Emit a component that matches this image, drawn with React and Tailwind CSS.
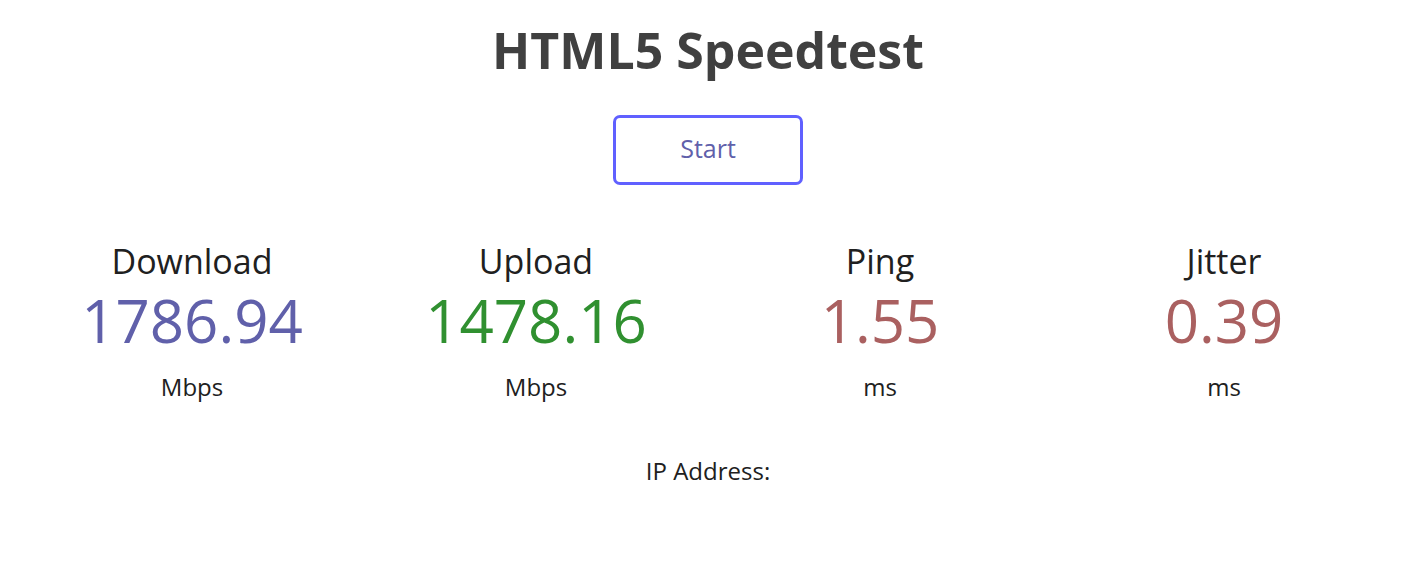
const results = [
  { name: 'Download', value: '1786.94', unit: 'Mbps', color: 'text-[#6060AA]' },
  { name: 'Upload', value: '1478.16', unit: 'Mbps', color: 'text-[#309030]' },
  { name: 'Ping', value: '1.55', unit: 'ms', color: 'text-[#AA6060]' },
  { name: 'Jitter', value: '0.39', unit: 'ms', color: 'text-[#AA6060]' },
]

const TestArea = ({ name, value, unit, color }) => (
  <div className="flex flex-col items-center">
    <div className="text-[34px] leading-[40px]">{name}</div>
    <div className={`text-[60px] leading-[78px] ${color}`}>{value}</div>
    <div className="mt-3 text-[24px] leading-[32px]">{unit}</div>
  </div>
)

export default function App() {
  return (
    <div
      className="min-h-[570px] bg-white pt-5 text-center text-[#202020]"
      style={{ fontFamily: '"Open Sans", "Noto Sans", sans-serif' }}
    >
      <h1 className="text-[50px] font-bold leading-[60px] text-[#404040]">HTML5 Speedtest</h1>
      <div className="mt-[35px] flex justify-center">
        <button className="flex h-[70px] w-[190px] items-center justify-center rounded-[7px] border-[3px] border-[#6060FF] pb-0.5 text-[25px] text-[#6060AA]">
          Start
        </button>
      </div>
      <div className="mt-[56px] grid grid-cols-4 px-5">
        {results.map((r) => (
          <TestArea key={r.name} {...r} />
        ))}
      </div>
      <div className="mt-[52px] text-[24px] leading-[32px]">IP Address:</div>
    </div>
  )
}
